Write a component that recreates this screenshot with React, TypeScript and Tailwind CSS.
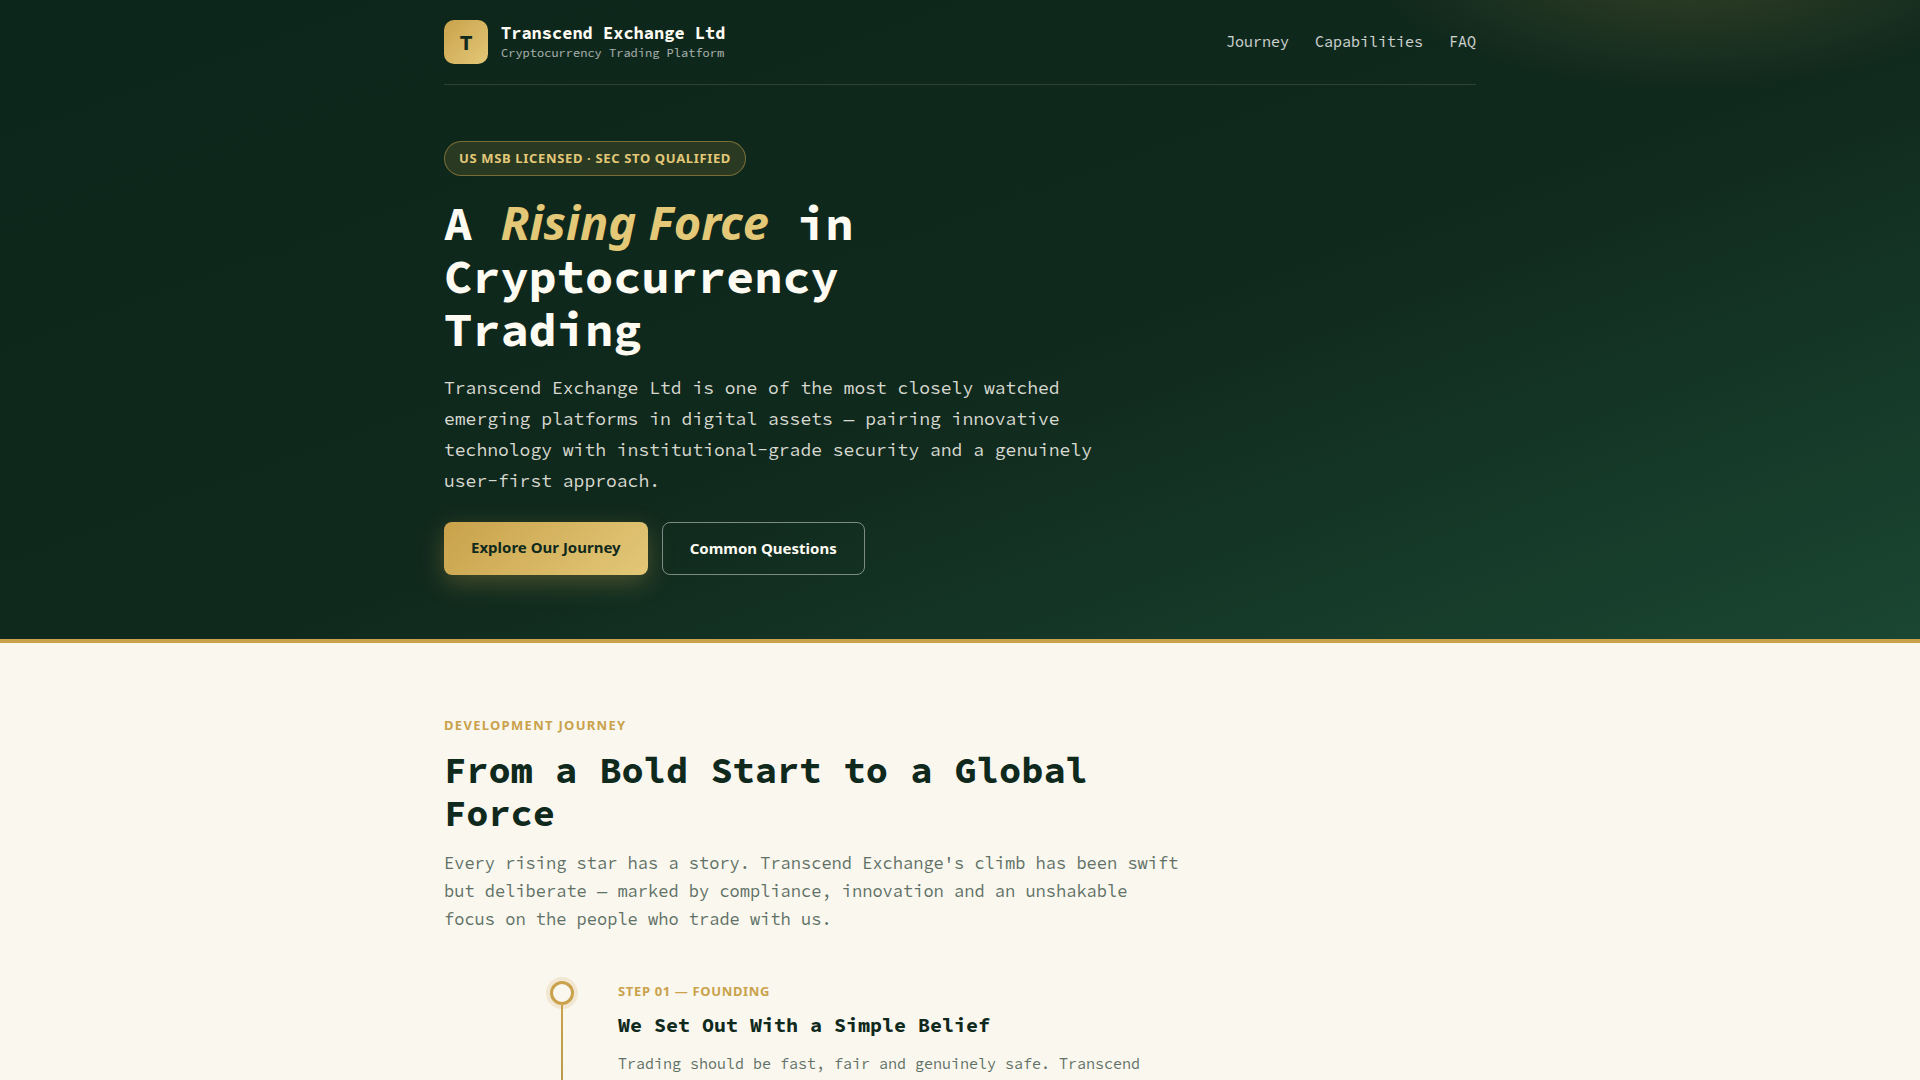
const navLinks = [
  { label: "Journey", href: "#journey" },
  { label: "Capabilities", href: "#capabilities" },
  { label: "FAQ", href: "#faq" },
];

const steps = [
  {
    label: "Step 01 — Founding",
    title: "We Set Out With a Simple Belief",
    text: "Trading should be fast, fair and genuinely safe. Transcend Exchange was founded on that belief.",
  },
];

function Header() {
  return (
    <header className="flex items-center justify-between border-b border-white/12 py-5">
      <a href="#top" className="flex items-center gap-[13px]">
        <span className="flex size-11 items-center justify-center rounded-[10px] bg-[linear-gradient(135deg,#c9a24b,#e3c878)] text-[22px] font-bold text-[#10291d]">
          T
        </span>
        <span className="pb-0.5">
          <span className="block text-[17px] leading-6 font-bold text-[#fefbf3]">Transcend Exchange Ltd</span>
          <span className="block text-xs leading-4 text-white/65">Cryptocurrency Trading Platform</span>
        </span>
      </a>
      <nav className="flex gap-[26px] text-[15px] text-white/80">
        {navLinks.map((link) => (
          <a key={link.label} href={link.href} className="hover:text-[#e3c878]">
            {link.label}
          </a>
        ))}
      </nav>
    </header>
  );
}

function Hero() {
  return (
    <div
      id="top"
      className="border-b-4 border-[#c9a24b] bg-[radial-gradient(325px_132px_at_88%_-43px,rgba(201,162,75,0.2),transparent),linear-gradient(160deg,#0d261b_0%,#10291d_55%,#1a4632_100%)]"
    >
      <div className="mx-auto max-w-[1080px] px-6">
        <Header />
        <div className="pt-14 pb-16">
          <p className="inline-flex rounded-full border border-[#c9a24b]/50 bg-[#c9a24b]/15 px-3.5 py-1.5 font-['Noto_Sans',sans-serif] text-[13px] leading-[21px] font-bold tracking-wider text-[#e3c878] uppercase">
            US MSB Licensed · SEC STO Qualified
          </p>
          <h1 className="mt-5 max-w-[600px] text-[47px] leading-[53px] font-bold text-[#fefbf3]">
            A <em className="font-['Noto_Sans',sans-serif] text-[#e3c878]">Rising Force</em> in Cryptocurrency Trading
          </h1>
          <p className="mt-4 max-w-[680px] text-lg leading-[31px] text-[#fefbf3]/85">
            Transcend Exchange Ltd is one of the most closely watched emerging platforms in digital assets — pairing
            innovative technology with institutional-grade security and a genuinely user-first approach.
          </p>
          <div className="mt-[26px] flex gap-3.5 font-['Noto_Sans',sans-serif] text-[15px] leading-[25px] font-bold">
            <a
              href="#journey"
              className="rounded-lg bg-[linear-gradient(135deg,#c9a24b,#e3c878)] px-[27px] py-[13px] text-[#10291d] shadow-[0_8px_24px_rgba(201,162,75,0.3)]"
            >
              Explore Our Journey
            </a>
            <a href="#faq" className="rounded-lg border border-white/45 px-[27px] py-[13px] text-[#fefbf3]">
              Common Questions
            </a>
          </div>
        </div>
      </div>
    </div>
  );
}

function Journey() {
  return (
    <section id="journey" className="mx-auto max-w-[1080px] px-6 py-18">
      <p className="font-['Noto_Sans',sans-serif] text-[13px] leading-5 font-bold tracking-widest text-[#c9a24b] uppercase">
        Development Journey
      </p>
      <h2 className="mt-3.5 max-w-[740px] text-[37px] leading-[43px] font-bold text-[#10291d]">
        From a Bold Start to a Global Force
      </h2>
      <p className="mt-3.5 max-w-[740px] text-[17px] leading-7 text-[#5f7166]">
        Every rising star has a story. Transcend Exchange's climb has been swift but deliberate — marked by compliance,
        innovation and an unshakable focus on the people who trade with us.
      </p>
      <ol className="mx-auto mt-12 max-w-[820px]">
        {steps.map((step) => (
          <li key={step.label} className="flex gap-11">
            <div className="flex flex-col items-center">
              <span className="size-6 rounded-full border-[3px] border-[#c9a24b] bg-[#faf7ef] shadow-[0_0_0_4px_rgba(201,162,75,0.18)]" />
              <span className="w-0.5 grow bg-linear-to-b from-[#c9a24b] to-[#a8974a]" />
            </div>
            <div className="pb-14">
              <p className="font-['Noto_Sans',sans-serif] text-[13px] leading-5 font-bold tracking-wider text-[#c9a24b] uppercase">
                {step.label}
              </p>
              <h3 className="mt-2.5 text-xl leading-7 font-bold text-[#10291d]">{step.title}</h3>
              <p className="mt-3 max-w-[600px] text-[15px] leading-[26px] text-[#5f7166]">{step.text}</p>
            </div>
          </li>
        ))}
      </ol>
    </section>
  );
}

export default function App() {
  return (
    <main className="min-h-screen bg-[#faf7ef] font-['Source_Code_Pro','Noto_Sans_Mono',monospace]">
      <Hero />
      <Journey />
    </main>
  );
}
